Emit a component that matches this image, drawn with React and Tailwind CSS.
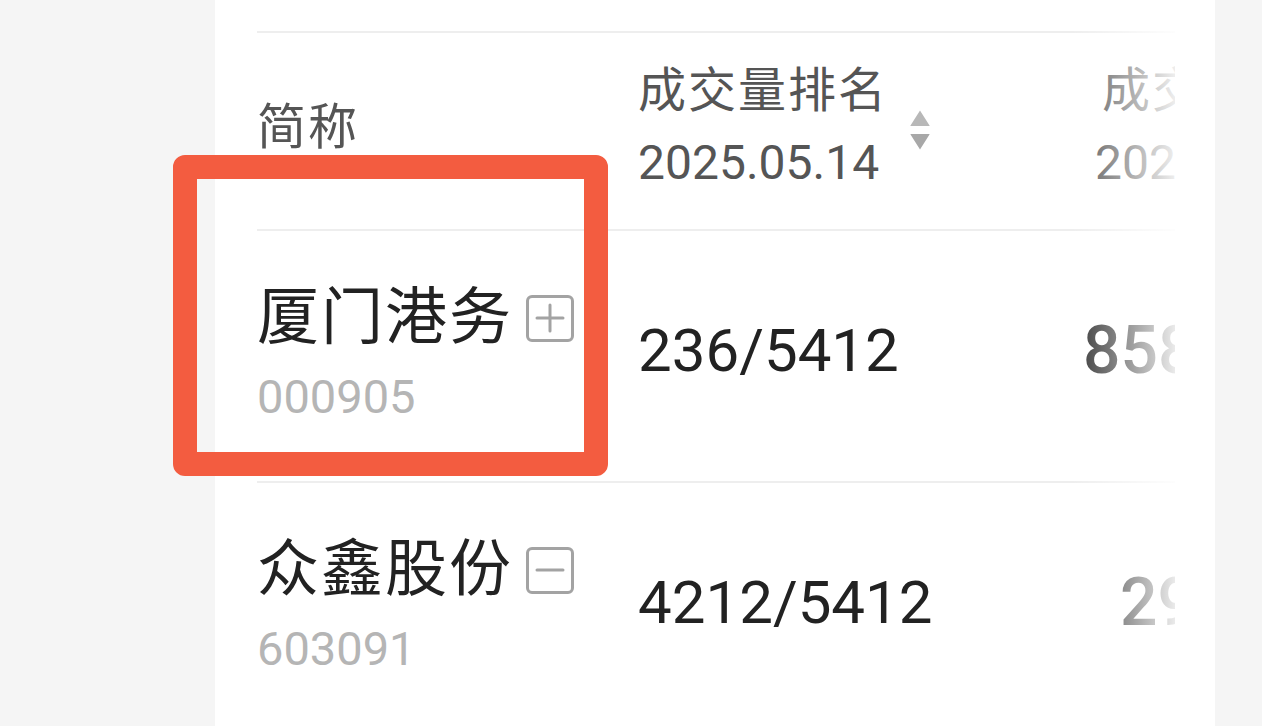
const ROWS = [
  { name: '厦门港务', code: '000905', rank: '236/5412', amount: '858.3万', pad: 'pl-[3px]', kind: 'plus' },
  { name: '众鑫股份', code: '603091', rank: '4212/5412', amount: '29.51万', pad: 'pl-[40px]', kind: 'minus' },
]

function WatchBox({ kind }) {
  return (
    <span className="flex h-[47px] w-[48px] shrink-0 items-center justify-center rounded-[6px] border-[3px] border-[#a3a3a3]">
      <svg width="30" height="30" viewBox="0 0 30 30" fill="none" stroke="#a3a3a3" strokeWidth="3" strokeLinecap="round">
        <path d="M2 15h26" />
        {kind === 'plus' && <path d="M15 2v26" />}
      </svg>
    </span>
  )
}

function SortIcon() {
  return (
    <svg width="22" height="42" viewBox="0 0 22 42" className="ml-[21px] mt-[6px] shrink-0">
      <path d="M11 1.5 L20.5 16.5 Q21 17 20 17 H2 Q1 17 1.5 16.5 Z" fill="#b8b8b8" />
      <path d="M11 40.5 L20.5 25.5 Q21 25 20 25 H2 Q1 25 1.5 25.5 Z" fill="#a8a8a8" />
    </svg>
  )
}

export default function App() {
  return (
    <div className="relative min-h-screen bg-[#f5f5f5] font-['Roboto','Noto_Sans_CJK_SC',sans-serif]">
      <div className="ml-[215px] h-[726px] w-[1000px] overflow-hidden bg-white pl-[42px] pr-[40px] pt-[31px]">
        <div className="relative">
          <div className="grid h-[198px] grid-cols-[381px_442px_95px] items-center border-t-2 border-[#eeeeee]">
            <div className="mt-[-8px] text-[49px] leading-none tracking-[2px] text-[#555555]">简称</div>
            <div className="mt-[-8px] flex items-center">
              <div className="flex flex-col text-[#555555]">
                <span className="text-[48px] leading-[56px] tracking-[2px]">成交量排名</span>
                <span className="mt-[16px] text-[48px] leading-[56px]">2025.05.14</span>
              </div>
              <SortIcon />
            </div>
            <div className="mt-[-8px] flex flex-col overflow-hidden whitespace-nowrap text-[#555555]">
              <span className="pl-[22px] text-[48px] leading-[56px] tracking-[2px]">成交额</span>
              <span className="mt-[16px] pl-[15px] text-[48px] leading-[56px]">2025.05.14</span>
            </div>
          </div>

          {ROWS.map((row) => (
            <div key={row.code} className="grid h-[252px] grid-cols-[381px_442px_95px] items-center border-t-2 border-[#eeeeee]">
              <div className="mb-[8px] flex flex-col">
                <div className="flex items-center gap-[13px]">
                  <span className="text-[62px] leading-[70px] tracking-[2px] text-[#222222]">{row.name}</span>
                  <WatchBox kind={row.kind} />
                </div>
                <span className="mt-[20px] text-[47px] leading-[48px] text-[#b5b5b5]">{row.code}</span>
              </div>
              <div className="mb-[10px] text-[60px] leading-none text-[#222222]">{row.rank}</div>
              <div className={`mb-[10px] overflow-hidden whitespace-nowrap text-[66px] leading-none font-medium text-[#333333] ${row.pad}`}>
                {row.amount}
              </div>
            </div>
          ))}

          <div className="pointer-events-none absolute inset-y-0 right-0 w-[104px] bg-linear-to-r from-white/0 to-white/90" />
        </div>
      </div>

      <div className="pointer-events-none absolute left-[173px] top-[155px] h-[321px] w-[435px] rounded-[12px] border-[24px] border-[#f35c40]" />
    </div>
  )
}
